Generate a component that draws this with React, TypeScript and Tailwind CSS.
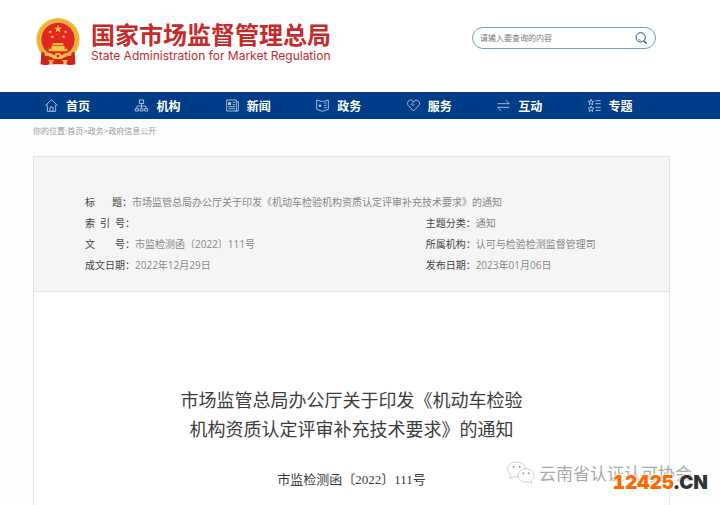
import type { ReactNode } from "react";

interface NavItem {
  label: string;
  icon: ReactNode;
}

interface MetaItem {
  label: string;
  value: string;
  wide?: boolean;
}

const STAR = "M0 -1 L0.26 -0.34 L0.95 -0.31 L0.41 0.13 L0.59 0.81 L0 0.42 L-0.59 0.81 L-0.41 0.13 L-0.95 -0.31 L-0.26 -0.34 Z";

const navItems: NavItem[] = [
  {
    label: "首页",
    icon: (
      <>
        <path d="M1 20 L19.5 2 L38 20" />
        <path d="M7 17 V37 H32 V17" />
        <path d="M15 37 V24 H24 V37" />
      </>
    ),
  },
  {
    label: "机构",
    icon: (
      <>
        <rect x="13" y="3" width="13" height="10" />
        <path d="M19.5 13 V28 M6 28 V21 H33 V28" />
        <path d="M1 36 V29 H10 V36 Z M15 36 V29 H24 V36 Z M29 36 V29 H38 V36 Z" />
      </>
    ),
  },
  {
    label: "新闻",
    icon: (
      <>
        <path d="M2 3 H31 V36 H2 Z" />
        <path d="M31 8 H37 V36 H28" />
        <rect x="8" y="11" width="6" height="6" fill="currentColor" />
        <path d="M20 10 H27 M20 17 H27 M7 23 H27 M7 29 H27" />
      </>
    ),
  },
  {
    label: "政务",
    icon: (
      <>
        <path d="M19 8 L2 3 V31 L19 37 L37 31 V3 Z" />
        <path d="M24 13 L32 11 M24 20 L32 18 M24 27 L32 25" />
        <path d={STAR} transform="translate(12 20) scale(6)" fill="currentColor" stroke="none" />
      </>
    ),
  },
  {
    label: "服务",
    icon: (
      <>
        <path d="M19.5 36 L4 20 C-2 12 4 3 11 3 C15 3 18 6 20 9 C22 5 26 3 30 4 C37 5 40 14 35 20 Z" />
        <path d="M20 9 L13 16 C16 21 20 19 22 15" />
      </>
    ),
  },
  {
    label: "互动",
    icon: (
      <>
        <path d="M2 14 H37 L27 4" />
        <path d="M37 25 H2 L12 35" />
      </>
    ),
  },
  {
    label: "专题",
    icon: (
      <>
        <path d={STAR} transform="translate(9 10) scale(9)" strokeWidth="0.25" />
        <path d={STAR} transform="translate(9 30) scale(9)" strokeWidth="0.25" />
        <path d="M22 5 H38 M22 14 H38 M22 25 H38 M22 34 H38" />
      </>
    ),
  },
];

const metaItems: MetaItem[] = [
  { label: "标题", value: "市场监管总局办公厅关于印发《机动车检验机构资质认定评审补充技术要求》的通知", wide: true },
  { label: "索引号", value: "" },
  { label: "主题分类", value: "通知" },
  { label: "文号", value: "市监检测函〔2022〕111号" },
  { label: "所属机构", value: "认可与检验检测监督管理司" },
  { label: "成文日期", value: "2022年12月29日" },
  { label: "发布日期", value: "2023年01月06日" },
];

function Emblem() {
  return (
    <svg viewBox="0 0 132 141" className="h-[47px] w-11 shrink-0" aria-hidden="true">
      <path d="M20 96 L14 137 Q28 143 42 137 H90 Q104 143 118 137 L112 96 Z" fill="#c9201c" />
      <circle cx="66" cy="65" r="65" fill="#f0bb3d" />
      <circle cx="66" cy="65" r="57" fill="none" stroke="#dda02c" strokeWidth="2" />
      <circle cx="66" cy="64" r="50" fill="#e3261f" />
      <g fill="#f6c544">
        <path d={STAR} transform="translate(66 33) scale(12)" />
        <path d={STAR} transform="translate(43 42) scale(6)" />
        <path d={STAR} transform="translate(89 42) scale(6)" />
        <path d={STAR} transform="translate(49 57) scale(6)" />
        <path d={STAR} transform="translate(83 57) scale(6)" />
        <path d="M52 75 H80 L84 82 H48 Z" />
        <path d="M46 84 H86 V92 H94 V100 H38 V92 H46 Z" />
      </g>
      <path d="M16 102 Q40 104 66 114 Q92 104 116 102 L118 139 Q98 143 92 139 H40 Q32 143 14 139 Z" fill="#cf221d" />
      <path d="M24 101 Q46 104 66 117 Q86 104 108 101 L105 113 Q88 114 76 124 L66 120 L56 124 Q44 114 27 113 Z" fill="#f2c046" />
      <circle cx="66" cy="114" r="10" fill="#f2c046" />
      <circle cx="66" cy="114" r="4" fill="#cf221d" />
      <path d="M36 126 H56 L50 131 V138 H40 V131 Z M76 126 H96 L92 131 V138 H82 V131 Z" fill="#f2c046" />
    </svg>
  );
}

function WechatMark() {
  return (
    <svg viewBox="0 0 84 72" className="h-6 w-7 shrink-0" fill="white" stroke="#b5b5b5" strokeWidth="2" aria-hidden="true">
      <path d="M28 3 C12 3 2 13 2 25 C2 33 6 39 12 43 L10 53 L20 47 C42 52 56 42 56 25 C56 13 44 3 28 3 Z" />
      <path d="M57 23 C42 23 33 33 33 43 C33 56 46 65 63 62 L74 68 L72 59 C78 55 82 50 82 43 C82 32 71 23 57 23 Z" />
      <g fill="#999" stroke="none">
        <circle cx="20" cy="18" r="3" />
        <circle cx="38" cy="18" r="3" />
        <circle cx="49" cy="37" r="3" />
        <circle cx="65" cy="37" r="3" />
      </g>
    </svg>
  );
}

function Header() {
  return (
    <header className="flex h-[92px] items-start justify-between bg-white pr-16 pl-9">
      <a href="#" className="flex items-start gap-[11px] pt-[18px]">
        <Emblem />
        <span className="block pt-1 text-[#c62a2b]">
          <span className="block text-2xl leading-6 font-bold">国家市场监督管理总局</span>
          <span className="block pt-0.5 font-[Inter,'Liberation_Sans',sans-serif] text-xs leading-4">
            State Administration for Market Regulation
          </span>
        </span>
      </a>
      <form
        className="mt-[27px] flex h-[22px] w-[184px] items-center rounded-full border border-[#6ba3bd] bg-white pr-2 pl-[7px]"
        onSubmit={(e) => e.preventDefault()}
      >
        <input
          type="text"
          aria-label="搜索"
          placeholder="请输入要查询的内容"
          className="min-w-0 flex-1 text-[8px] text-gray-700 placeholder-[#777] outline-none"
        />
        <button type="submit" aria-label="搜索" className="text-[#2b5480]">
          <svg viewBox="0 0 36 36" className="h-3 w-3" fill="none" stroke="currentColor" strokeWidth="3">
            <circle cx="17" cy="16" r="14" />
            <path d="M26 26 L35 35" strokeWidth="4" />
            <path d="M9 19 Q11 24 17 25" strokeWidth="2" />
          </svg>
        </button>
      </form>
    </header>
  );
}

function MainNav() {
  return (
    <nav className="bg-[#003d88] pr-[54px] pl-[33px]">
      <ul className="grid grid-cols-7">
        {navItems.map((item) => (
          <li key={item.label}>
            <a href="#" className="flex h-[27px] items-center gap-2 pl-3 text-xs font-bold text-white">
              <svg
                viewBox="0 0 39 39"
                className="h-[13px] w-[13px] overflow-visible text-[#c9dcf0]"
                fill="none"
                stroke="currentColor"
                strokeWidth="2.4"
                aria-hidden="true"
              >
                {item.icon}
              </svg>
              {item.label}
            </a>
          </li>
        ))}
      </ul>
    </nav>
  );
}

function MetaRow({ label, value, wide }: MetaItem) {
  return (
    <div className={wide ? "col-span-2 flex" : "flex"}>
      <dt className="flex shrink-0 text-[#444]">
        <span className={wide ? "flex w-[37px] justify-between" : "flex w-10 justify-between"}>
          {label.split("").map((char) => (
            <span key={char}>{char}</span>
          ))}
        </span>
        ：
      </dt>
      <dd className="whitespace-nowrap text-[#888]">{value}</dd>
    </div>
  );
}

export default function App() {
  return (
    <div
      lang="zh-CN"
      className="relative flex min-h-screen flex-col overflow-hidden bg-[#fdfdfd] font-['Noto_Sans_CJK_SC',sans-serif]"
    >
      <Header />
      <MainNav />

      <main className="flex flex-1 flex-col pr-[50px] pl-[33px]">
        <div className="flex h-[37px] items-start pt-1.5 text-[8px] leading-3 text-[#999]">
          你的位置:<a href="#">首页</a>&gt;<a href="#">政务</a>&gt;<a href="#">政府信息公开</a>
        </div>

        <dl className="grid grid-cols-[7fr_5fr] border border-[#e2e3e6] bg-[#f5f5f5] pt-[35px] pb-[15px] pl-[51px] font-['Open_Sans','Noto_Sans_CJK_SC',sans-serif] text-[10px] leading-[21px]">
          {metaItems.map((item) => (
            <MetaRow key={item.label} {...item} />
          ))}
        </dl>

        <article className="flex-1 border-x border-[#e6e8ef] bg-white pt-[93px] text-center text-[#3c3c3c]">
          <h1 className="text-lg leading-[29px]">
            市场监管总局办公厅关于印发《机动车检验
            <br />
            机构资质认定评审补充技术要求》的通知
          </h1>
          <p className="pt-[27px] font-['Liberation_Serif','Noto_Sans_CJK_SC',serif] text-[13px] leading-5">
            市监检测函〔2022〕111号
          </p>
        </article>
      </main>

      <div className="absolute right-7 bottom-5 flex items-center gap-1 text-[17px] leading-6 whitespace-nowrap text-[#aaa]">
        <WechatMark />
        云南省认证认可协会
      </div>
      <div className="absolute right-3 bottom-3 font-[Inter,'Liberation_Sans',sans-serif] text-[19px] leading-5 font-black text-[#333] tabular-nums [text-shadow:0_0_2px_white,0_0_2px_white,0_0_3px_white,0_0_3px_white]">
        <span className="text-[#ff6a00]">12425</span>.CN
      </div>
    </div>
  );
}
